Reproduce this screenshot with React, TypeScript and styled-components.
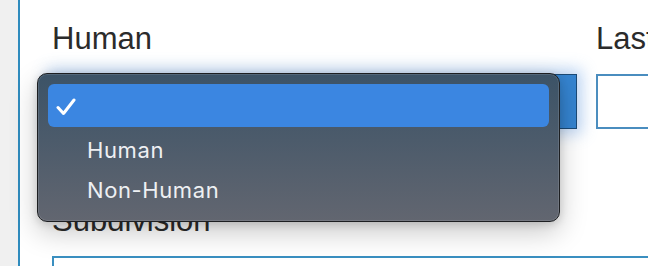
import React from "react";
import styled, { createGlobalStyle } from "styled-components";

const Global = createGlobalStyle`
  html, body { margin: 0; padding: 0; background: #f0f0f0; overflow: hidden; }
  * { box-sizing: border-box; }
`;

const Shell = styled.div`
  display: flex;
  width: 648px;
  height: 266px;
  overflow: hidden;
`;

const Gutter = styled.div`
  width: 18px;
  flex: none;
  background: #f0f0f0;
`;

const Main = styled.main`
  flex: 1;
  background: #ffffff;
  border-left: 2px solid #2f8bbd;
  padding: 20px 0 0 32px;
  display: flex;
  flex-direction: column;
  gap: 73px;
  font-family: "Liberation Sans", Arial, sans-serif;
`;

const Row = styled.div`
  display: flex;
  gap: 19px;
`;

const Field = styled.div<{ $w?: number }>`
  position: relative;
  display: flex;
  flex-direction: column;
  width: ${(p) => (p.$w ? `${p.$w}px` : "auto")};
  flex: ${(p) => (p.$w ? "none" : "1")};
`;

const Label = styled.label`
  font-size: 31px;
  line-height: 37px;
  color: #2b2b2b;
  margin-bottom: 17px;
  white-space: nowrap;
`;

const SelectBox = styled.div`
  height: 55px;
  background: #3584d0;
  border: 1px solid #1c4a75;
  box-shadow: 0 0 14px 5px rgba(110, 165, 230, 0.45);
`;

const TextBox = styled.div`
  height: 55px;
  width: 200px;
  background: #fff;
  border: 2px solid #4a8dbf;
`;

const WideBox = styled.div`
  height: 55px;
  width: 620px;
  background: #fff;
  border: 2px solid #3a8fc0;
`;

const Menu = styled.div`
  position: absolute;
  left: -15px;
  top: 53px;
  width: 523px;
  height: 149px;
  border-radius: 10px;
  border: 1px solid #1d1f22;
  background: linear-gradient(180deg, #3c5367 0%, #4c5b6b 45%, #626670 100%);
  box-shadow: inset 0 0 0 1px rgba(255, 255, 255, 0.12), 0 10px 28px rgba(0, 0, 0, 0.22),
    0 2px 8px rgba(0, 0, 0, 0.15);
  padding: 10px;
  display: flex;
  flex-direction: column;
  font-family: Inter, "Noto Sans", sans-serif;
  z-index: 5;
`;

const Item = styled.div<{ $active?: boolean }>`
  position: relative;
  height: ${(p) => (p.$active ? 43 : 40)}px;
  display: flex;
  align-items: center;
  padding-left: 39px;
  padding-top: ${(p) => (p.$active ? 0 : 6)}px;
  border-radius: 6px;
  background: ${(p) => (p.$active ? "#3b86e1" : "transparent")};
  color: #eef0f3;
  font-size: 22px;
  letter-spacing: 0.6px;
`;

const Check = styled.svg`
  position: absolute;
  left: 8px;
  top: 14px;
`;

export default function App() {
  return (
    <>
      <Global />
      <Shell>
        <Gutter />
        <Main>
          <Row>
            <Field $w={525}>
              <Label>Human</Label>
              <SelectBox />
              <Menu>
                <Item $active>
                  <Check width="20" height="18" viewBox="0 0 20 18">
                    <polyline
                      points="2,9.5 7.5,15.5 18,2"
                      fill="none"
                      stroke="#ffffff"
                      strokeWidth="3"
                      strokeLinecap="round"
                      strokeLinejoin="round"
                    />
                  </Check>
                </Item>
                <Item>Human</Item>
                <Item>Non-Human</Item>
              </Menu>
            </Field>
            <Field>
              <Label>Last Name</Label>
              <TextBox />
            </Field>
          </Row>
          <Row>
            <Field>
              <Label>Subdivision</Label>
              <WideBox />
            </Field>
          </Row>
        </Main>
      </Shell>
    </>
  );
}
